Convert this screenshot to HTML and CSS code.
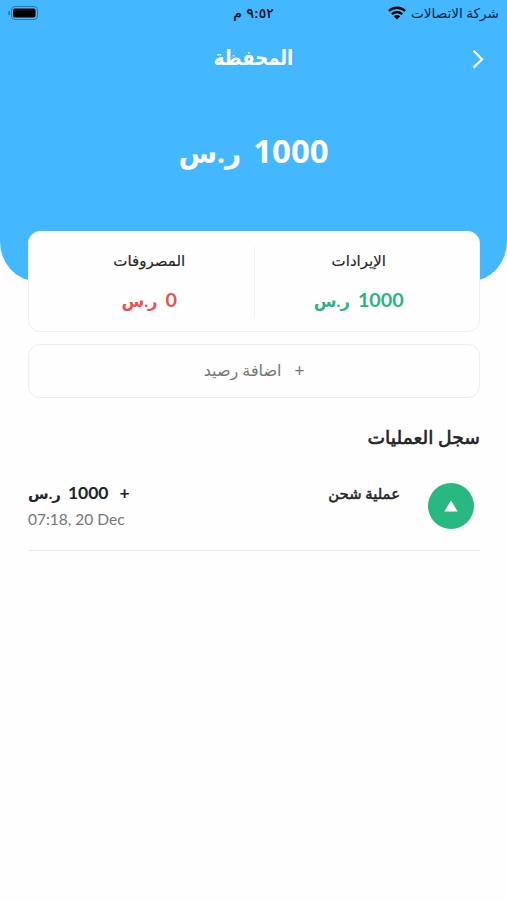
FILE: index.html
```html
<!DOCTYPE html>
<html lang="ar" dir="rtl">
<head>
<meta charset="utf-8">
<title>المحفظة</title>
<link rel="stylesheet" href="styles.css">
</head>
<body>
<header class="hero">
  <div class="status">
    <div class="carrier"><span class="carrier-name">شركة الاتصالات</span>
      <svg class="wifi" viewBox="0 0 18 14" width="18" height="14"><g fill="none" stroke="#000" stroke-width="2.4"><path d="M.9 5C5.4.6 12.6.6 17.1 5"/><path d="M3.9 8.2c2.900-2.800 7.300-2.800 10.200 0"/></g><path d="M5.800 10.300c1.800-1.700 4.600-1.700 6.400 0L9 13.600z"/></svg>
    </div>
    <div class="time">٩:٥٢ م</div>
    <svg class="battery" viewBox="0 0 30 14" width="30" height="14"><rect x="3.5" y=".5" width="26" height="13" rx="3.5" fill="none" stroke="#2878a9"/><rect x="5" y="2.5" width="22.5" height="9" rx="1.8"/><path d="M1.7 4.7v4.6C-.2 8.6-.2 5.4 1.7 4.7" fill="#1b5f8c"/></svg>
  </div>
  <div class="nav">
    <h1 class="title">المحفظة</h1>
    <svg class="back" viewBox="0 0 12 20" width="12" height="20"><path d="M1.5 1.8L10 10.200l-8.500 8.400" fill="none" stroke="#fff" stroke-width="2.300"/></svg>
  </div>
  <div class="balance"><span class="num">1000</span><span class="cur">ر.س</span></div>
</header>
<main class="content">
  <section class="card">
    <div class="stat"><div class="label">الإيرادات</div><div class="amount green"><span class="num">1000</span><span class="cur">ر.س</span></div></div>
    <div class="divider"></div>
    <div class="stat"><div class="label">المصروفات</div><div class="amount red"><span class="num">0</span><span class="cur">ر.س</span></div></div>
  </section>
  <div class="add" role="button"><span class="plus">+</span><span class="add-text">اضافة رصيد</span></div>
  <h2 class="section-title">سجل العمليات</h2>
  <section class="row">
    <div class="circle"><svg viewBox="0 0 14 12" width="14" height="12"><path d="M7 .5L13.7 11.500H.3z" fill="#fff"/></svg></div>
    <div class="row-name">عملية شحن</div>
    <div class="row-end" dir="ltr">
      <div class="row-amount"><span class="cur">ر.س</span><span class="num">1000</span><span class="sign">+</span></div>
      <div class="date">07:18, 20 Dec</div>
    </div>
  </section>
</main>
</body>
</html>
```
FILE: styles.css
```css
* { box-sizing: border-box; }
body { margin: 0; background: #fefefe; color: #242426; font-family: Lato, "DejaVu Sans", sans-serif; height: 900px; overflow: hidden; }
h1, h2 { margin: 0; }
svg { display: block; flex: none; }
.hero { height: 281px; background: #43b7ff; border-radius: 0 0 36px 36px / 0 0 40px 40px; color: #fff; }
.status { height: 26px; display: grid; grid-template-columns: 1fr auto 1fr; align-items: center; padding: 0 8px; color: #06263b; white-space: nowrap; }
.carrier { display: flex; align-items: center; gap: 5px; font-size: 13.600px; line-height: 20px; }
.time { font-size: 14px; line-height: 20px; color: #000; font-family: "DejaVu Sans", sans-serif; -webkit-text-stroke: .2px; }
.battery { justify-self: end; }
.nav { height: 65px; display: grid; grid-template-columns: 79px 1fr 79px; align-items: center; }
.title { grid-column: 2; grid-row: 1; margin-top: -3px; text-align: center; font-size: 21px; line-height: 30px; transform: scaleX(.86); }
.back { grid-column: 1; grid-row: 1; margin-right: 23px; }
.balance { height: 118px; display: flex; justify-content: center; align-items: baseline; padding-top: 37px; line-height: 46px; gap: 12px; font-size: 33px; font-weight: 700; font-family: "Open Sans", "DejaVu Sans", sans-serif; }
.balance .cur { font-size: 28px; }
.content { padding: 0 27px 0 28px; margin-top: -50px; }
.card { height: 101px; display: flex; align-items: center; background: #fefefe; border: 1px solid #efefef; border-radius: 12px; }
.stat { flex: 1; height: 100%; padding-top: 15px; text-align: center; }
.stat:first-child { padding-right: 16px; }
.stat:last-child { padding-left: 16px; }
.divider { width: 1px; height: 70px; background: #f1f1f1; }
.label { height: 26px; line-height: 26px; font-size: 15px; -webkit-text-stroke: .15px; }
.amount { height: 30px; line-height: 30px; margin-top: 11px; display: flex; align-items: baseline; justify-content: center; gap: 8px; font-size: 19.800px; font-weight: 700; }
.amount .cur { font-size: 16.500px; }
.green { color: #2ab580; }
.red { color: #ed4e50; }
.add { height: 54px; margin-top: 12px; padding-bottom: 2px; display: flex; align-items: center; justify-content: center; gap: 13px; border: 1px solid #ededed; border-radius: 12px; color: #757575; font-size: 16px; }
.plus { font-size: 17px; }
.section-title { height: 30px; margin-top: 24px; line-height: 30px; font-size: 18.700px; font-weight: 400; -webkit-text-stroke: .6px; }
.row { height: 99px; border-bottom: 1px solid #ececec; display: flex; padding-right: 6px; }
.circle { width: 46px; height: 46px; margin-top: 31px; border-radius: 50%; background: #28b882; display: flex; align-items: center; justify-content: center; }
.row-name { margin: 27px 28px 0 0; height: 28px; line-height: 28px; font-size: 14.800px; -webkit-text-stroke: .5px; }
.row-end { margin: 28px auto 0 0; }
.row-amount { height: 26px; line-height: 26px; display: flex; align-items: baseline; gap: 7px; font-size: 17.500px; font-weight: 700; }
.row-amount .cur { font-size: 15px; }
.sign { margin-left: 4px; }
.date { height: 26px; line-height: 26px; font-size: 15.500px; color: #777; }
```
